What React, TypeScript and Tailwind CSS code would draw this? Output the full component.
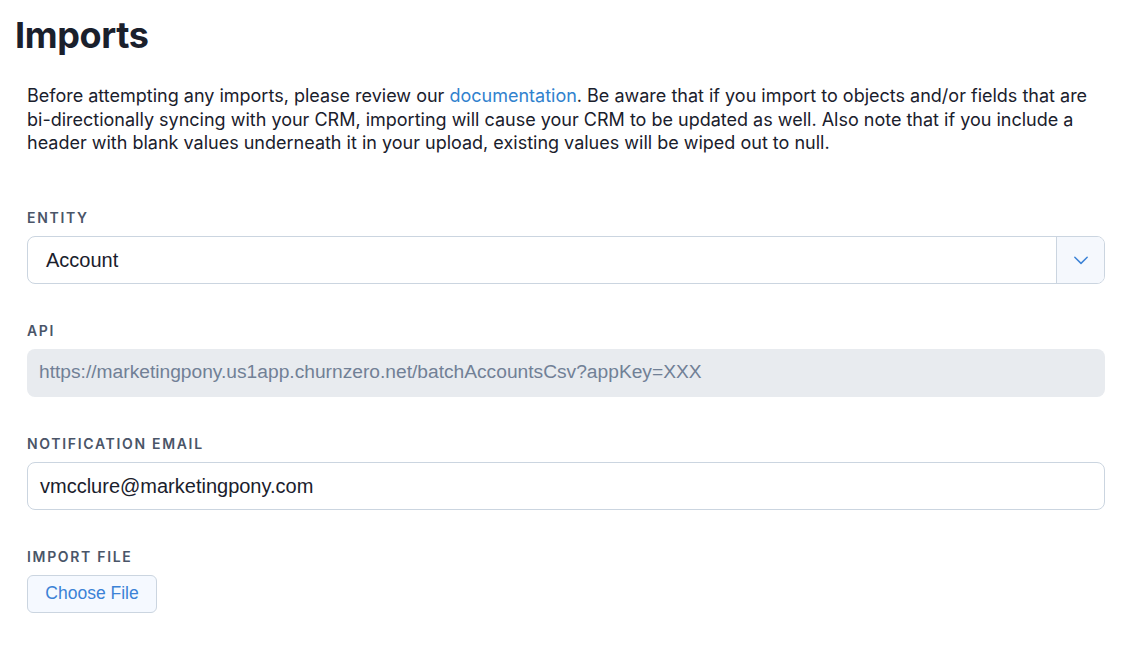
import React from "react";

const inter = "font-['Inter',sans-serif]";
const helv = "font-['Liberation_Sans',Arial,sans-serif]";

function FieldLabel({ children }: { children: React.ReactNode }) {
  return (
    <p
      className={`h-5 mb-2 text-[14px] leading-5 font-semibold tracking-[0.12em] uppercase text-[#4a5568] ${inter}`}
    >
      {children}
    </p>
  );
}

function ChevronDown() {
  return (
    <svg width="18" height="18" viewBox="0 0 16 16" fill="none">
      <path d="M2.5 5.5 L8 11 L13.5 5.5" stroke="#3b82d6" strokeWidth="1.3" strokeLinecap="round" strokeLinejoin="round" />
    </svg>
  );
}

export default function App() {
  return (
    <div className={`min-h-screen bg-white ${inter}`}>
      <div className="pl-[15px] pr-[39px] pt-[11px]">
        <h1 className="text-[36px] leading-[48px] font-bold tracking-[-0.01em] text-[#1a202c]">
          Imports
        </h1>

        <div className="pl-3 mt-[25px]">
          <p className="text-[18px] leading-[23.5px] text-[#1a202c]">
            Before attempting any imports, please review our{" "}
            <a className="text-[#3182ce]">documentation</a>. Be aware that if you import to
            objects and/or fields that are bi-directionally syncing with your CRM, importing will
            cause your CRM to be updated as well. Also note that if you include a header with blank
            values underneath it in your upload, existing values will be wiped out to null.
          </p>

          <div className="mt-[53px] flex flex-col gap-[37px]">
            <div>
              <FieldLabel>Entity</FieldLabel>
              <div className="flex h-12 rounded-lg border border-[#cbd5e0] bg-white overflow-hidden">
                <div className={`flex-1 flex items-center pl-[18px] text-[20px] text-[#1a202c] ${helv}`}>
                  Account
                </div>
                <div className="w-12 flex items-center justify-center border-l border-[#cbd5e0] bg-[#f5f8fd]">
                  <ChevronDown />
                </div>
              </div>
            </div>

            <div>
              <FieldLabel>API</FieldLabel>
              <div className={`flex items-center h-12 rounded-lg bg-[#e8ebef] pl-3 text-[19.2px] text-[#718096] ${helv}`}>
                https://marketingpony.us1app.churnzero.net/batchAccountsCsv?appKey=XXX
              </div>
            </div>

            <div>
              <FieldLabel>Notification Email</FieldLabel>
              <div className={`flex items-center h-12 rounded-lg border border-[#cbd5e0] bg-white pl-3 text-[20px] text-[#1a202c] ${helv}`}>
                vmcclure@marketingpony.com
              </div>
            </div>

            <div>
              <FieldLabel>Import File</FieldLabel>
              <button
                className={`h-[38px] w-[130px] rounded-md border border-[#cbd5e0] bg-[#f5f9ff] text-[17.5px] text-[#3b82d6] ${helv}`}
              >
                Choose File
              </button>
            </div>
          </div>
        </div>
      </div>
    </div>
  );
}
